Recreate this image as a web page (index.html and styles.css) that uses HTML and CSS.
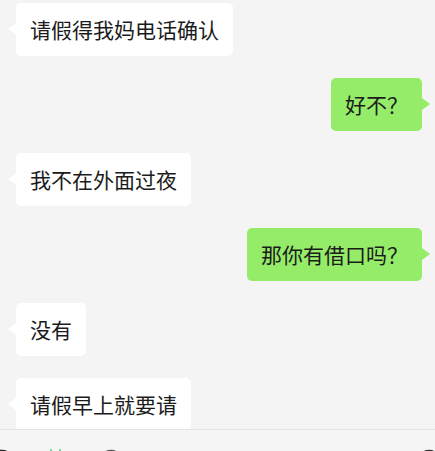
FILE: index.html
```html
<!DOCTYPE html>
<html lang="zh">
<head>
<meta charset="utf-8">
<link rel="stylesheet" href="styles.css">
</head>
<body>
<div class="screen">
  <div class="chat">
    <div class="row left"><div class="bubble white">请假得我妈电话确认</div></div>
    <div class="row right"><div class="bubble green">好不？</div></div>
    <div class="row left"><div class="bubble white">我不在外面过夜</div></div>
    <div class="row right"><div class="bubble green">那你有借口吗？</div></div>
    <div class="row left"><div class="bubble white">没有</div></div>
    <div class="row left"><div class="bubble white">请假早上就要请</div></div>
  </div>
  <div class="footer">
    <svg class="ic ic-voice" width="24" height="24" viewBox="0 0 24 24"><circle cx="12" cy="12" r="10.5" fill="none" stroke="#222" stroke-width="1.6"/></svg>
    <svg class="ic ic-green" width="14" height="24" viewBox="0 0 14 24"><path d="M2 0v8M11 0v8" stroke="#5fd38a" stroke-width="1.6"/></svg>
    <svg class="ic ic-emoji" width="24" height="24" viewBox="0 0 24 24"><circle cx="12" cy="12" r="10.5" fill="none" stroke="#555" stroke-width="1.6"/></svg>
    <span class="spacer"></span>
    <svg class="ic ic-plus" width="24" height="24" viewBox="0 0 24 24"><circle cx="12" cy="12" r="10.5" fill="none" stroke="#333" stroke-width="1.6"/></svg>
  </div>
</div>
</body>
</html>
```
FILE: styles.css
```css
html, body {
  margin: 0;
  padding: 0;
  background: #f4f4f4;
}
.screen {
  width: 435px;
  height: 451px;
  display: flex;
  flex-direction: column;
  overflow: hidden;
  font-family: "Noto Sans CJK SC", "Noto Sans", sans-serif;
}
.chat {
  height: 429px;
  overflow: hidden;
  display: flex;
  flex-direction: column;
  gap: 22px;
  padding: 3px 13px 0 16px;
  box-sizing: border-box;
  flex-shrink: 0;
}
.row {
  display: flex;
}
.row.right {
  justify-content: flex-end;
}
.bubble {
  position: relative;
  font-size: 21px;
  line-height: 25px;
  padding: 14px 14px;
  border-radius: 5px;
  color: #1b1b1b;
  white-space: nowrap;
}
.bubble.white {
  background: #ffffff;
}
.bubble.green {
  background: #95ec69;
}
.bubble::before {
  content: "";
  position: absolute;
  top: 20px;
  width: 0;
  height: 0;
  border-top: 6px solid transparent;
  border-bottom: 6px solid transparent;
}
.bubble.white::before {
  left: -8px;
  border-right: 8px solid #ffffff;
}
.bubble.green::before {
  right: -8px;
  border-left: 8px solid #95ec69;
}
.footer {
  flex: 1;
  border-top: 1px solid #e3e3e3;
  background: #f5f5f5;
  display: flex;
  align-items: flex-start;
  padding: 19px 0 0 0;
  box-sizing: border-box;
  overflow: hidden;
}
.ic {
  display: block;
  flex-shrink: 0;
}
.ic-voice {
  margin-left: -10px;
}
.ic-green {
  margin-left: 35px;
}
.ic-emoji {
  margin-left: 36px;
}
.spacer {
  flex: 1;
}
.ic-plus {
  margin-right: -6px;
}
```
